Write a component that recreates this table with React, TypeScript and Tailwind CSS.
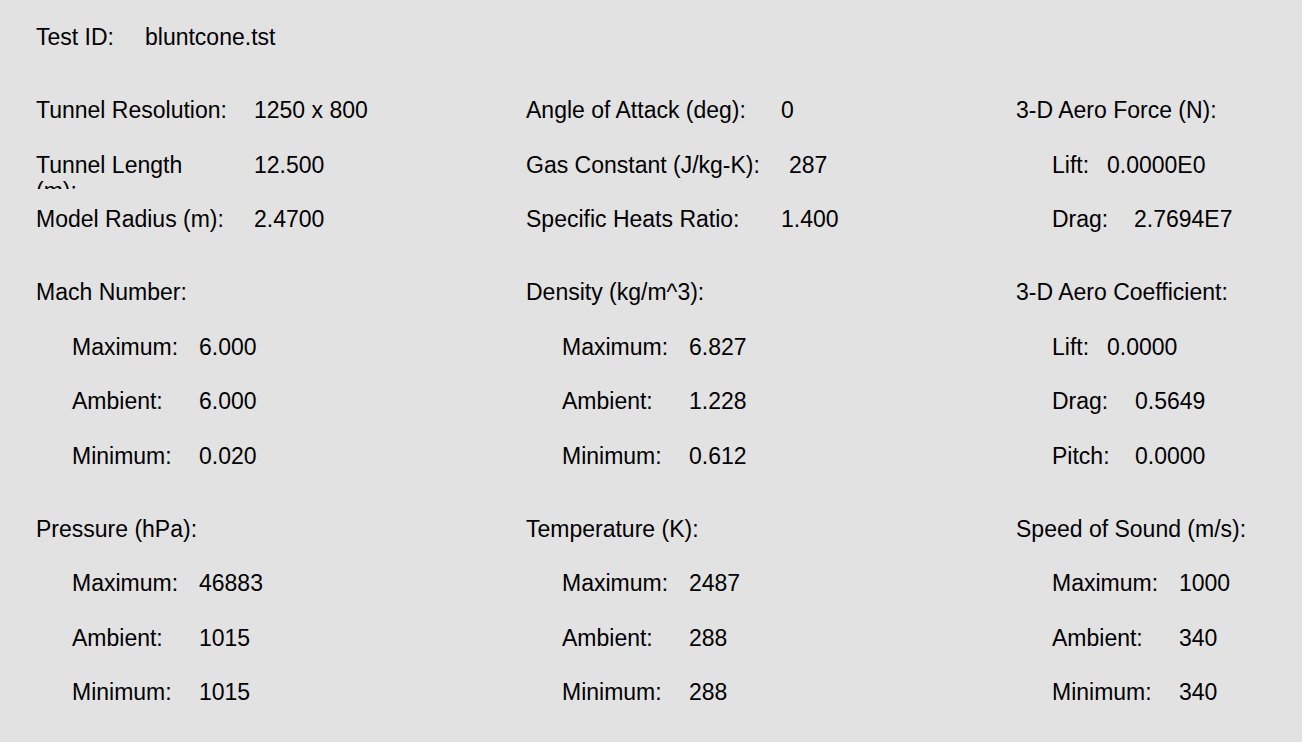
type Item = {
    label: string;
    value?: string;
    w?: number;
    sub?: boolean;
    wrap?: boolean;
};

const columns: Item[][][] = [
    [
        [
            { label: 'Tunnel Resolution:', value: '1250 x 800', w: 218 },
            { label: 'Tunnel Length (m):', value: '12.500', w: 218, wrap: true },
            { label: 'Model Radius (m):', value: '2.4700', w: 218 },
        ],
        [
            { label: 'Mach Number:' },
            { label: 'Maximum:', value: '6.000', w: 127, sub: true },
            { label: 'Ambient:', value: '6.000', w: 127, sub: true },
            { label: 'Minimum:', value: '0.020', w: 127, sub: true },
        ],
        [
            { label: 'Pressure (hPa):' },
            { label: 'Maximum:', value: '46883', w: 127, sub: true },
            { label: 'Ambient:', value: '1015', w: 127, sub: true },
            { label: 'Minimum:', value: '1015', w: 127, sub: true },
        ],
    ],
    [
        [
            { label: 'Angle of Attack (deg):', value: '0', w: 255 },
            { label: 'Gas Constant (J/kg-K):', value: '287', w: 263 },
            { label: 'Specific Heats Ratio:', value: '1.400', w: 255 },
        ],
        [
            { label: 'Density (kg/m^3):' },
            { label: 'Maximum:', value: '6.827', w: 127, sub: true },
            { label: 'Ambient:', value: '1.228', w: 127, sub: true },
            { label: 'Minimum:', value: '0.612', w: 127, sub: true },
        ],
        [
            { label: 'Temperature (K):' },
            { label: 'Maximum:', value: '2487', w: 127, sub: true },
            { label: 'Ambient:', value: '288', w: 127, sub: true },
            { label: 'Minimum:', value: '288', w: 127, sub: true },
        ],
    ],
    [
        [
            { label: '3-D Aero Force (N):' },
            { label: 'Lift:', value: '0.0000E0', w: 55, sub: true },
            { label: 'Drag:', value: '2.7694E7', w: 82, sub: true },
        ],
        [
            { label: '3-D Aero Coefficient:' },
            { label: 'Lift:', value: '0.0000', w: 55, sub: true },
            { label: 'Drag:', value: '0.5649', w: 83, sub: true },
            { label: 'Pitch:', value: '0.0000', w: 83, sub: true },
        ],
        [
            { label: 'Speed of Sound (m/s):' },
            { label: 'Maximum:', value: '1000', w: 127, sub: true },
            { label: 'Ambient:', value: '340', w: 127, sub: true },
            { label: 'Minimum:', value: '340', w: 127, sub: true },
        ],
    ],
];

const Row = ({ item }: { item: Item }) => (
    <div className={`flex items-center h-[54.5px] whitespace-nowrap ${item.sub ? 'pl-[36px]' : ''}`}>
        {item.wrap ? (
            <div className="shrink-0 h-[26px]" style={{ width: item.w }}>
                {/* label wraps and its second line is cut, as in the original panel */}
                <div className="w-[190px] h-[37px] overflow-hidden whitespace-normal leading-[26px]">{item.label}</div>
            </div>
        ) : (
            <div className="shrink-0" style={item.w ? { width: item.w } : undefined}>{item.label}</div>
        )}
        {item.value && <div>{item.value}</div>}
    </div>
);

const App = () => {
    return (
        <div className="w-[1302px] h-[742px] overflow-hidden bg-[#e2e2e2] text-black text-[23px] font-['Liberation_Sans',Arial,sans-serif]">
            <div className="flex flex-col gap-[18.5px] pt-[10px] px-[36px]">
                <Row item={{ label: 'Test ID:', value: 'bluntcone.tst', w: 109 }} />
                {[0, 1, 2].map((g) => (
                    <div key={g} className="grid grid-cols-[490px_490px_1fr]">
                        {columns.map((col, c) => (
                            <div key={c} className="flex flex-col">
                                {col[g].map((item, i) => (
                                    <Row key={i} item={item} />
                                ))}
                            </div>
                        ))}
                    </div>
                ))}
            </div>
        </div>
    );
};

export default App;
